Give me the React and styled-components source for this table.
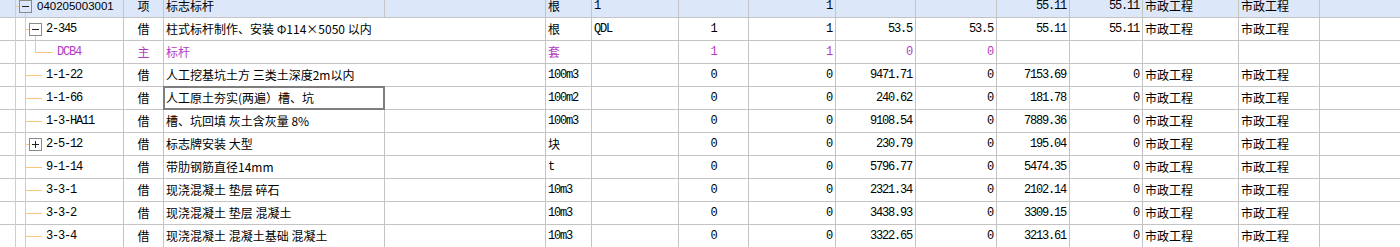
import React from 'react';
import styled, { createGlobalStyle, css } from 'styled-components';

const Global = createGlobalStyle`
  html, body { margin: 0; padding: 0; background: #ffffff; }
  body { font-family: "Noto Sans CJK SC", sans-serif; }
`;

const COLS = '124px 40px 221px 161px 46px 87px 70px 87px 80px 81px 73px 73px 96px 81px 1fr';
const LINE = '#c4c4c4';
const ORANGE = '#fcc67c';
const PURPLE = '#b23cc4';

const Viewport = styled.div`
  width: 1400px;
  height: 247px;
  overflow: hidden;
  background: #fff;
`;

const Table = styled.div`
  display: flex;
  flex-direction: column;
  margin-top: -5px;
`;

const Row = styled.div`
  display: grid;
  grid-template-columns: ${COLS};
  height: 23px;
  background: ${(p) => (p.$hl ? '#dce8fa' : '#ffffff')};
  color: ${(p) => (p.$purple ? PURPLE : '#000000')};
`;

const fonts = {
  cjk: css`
    font-family: "Noto Sans CJK SC", sans-serif;
    font-size: 12px;
  `,
  mono: css`
    font-family: "Liberation Mono", "Noto Sans CJK SC", monospace;
    font-size: 12px;
    letter-spacing: -1.2px;
  `,
  sans: css`
    font-family: "Liberation Sans", "Noto Sans CJK SC", sans-serif;
    font-size: 11.5px;
  `,
};

const Cell = styled.div`
  position: relative;
  box-sizing: border-box;
  height: 23px;
  line-height: 22px;
  white-space: nowrap;
  border-bottom: 1px solid ${LINE};
  border-right: ${(p) => (p.$last ? 'none' : `1px solid ${LINE}`)};
  grid-column: ${(p) => (p.$span ? `span ${p.$span}` : 'auto')};
  text-align: ${(p) => p.$align || 'left'};
  padding: ${(p) =>
    p.$align === 'right' ? '0 3px 0 0' : p.$align === 'center' ? '0' : '0 0 0 2px'};
  ${(p) => fonts[p.$font || 'cjk']}
  ${(p) =>
    p.$selected &&
    css`
      &::after {
        content: '';
        position: absolute;
        top: -1px;
        left: -1px;
        right: -1px;
        bottom: -1px;
        border: 2px solid #7e7e7e;
        z-index: 2;
      }
    `}
`;

const CodeCell = styled(Cell)`
  padding-left: ${(p) => p.$indent}px;
`;

const TreeSvg = styled.svg`
  position: absolute;
  top: 0;
  left: 0;
  overflow: visible;
  pointer-events: none;
`;

function Tree({ variant }) {
  const v = (x, y1, y2, k) => (
    <line key={k} x1={x + 0.5} x2={x + 0.5} y1={y1} y2={y2} stroke={ORANGE} />
  );
  const h = (x1, x2, k) => (
    <line key={k} x1={x1} x2={x2 + 1} y1={11.5} y2={11.5} stroke={ORANGE} />
  );
  const box = (x, plus, k) => (
    <g key={k}>
      <rect x={x + 0.5} y={5.5} width={12} height={12} fill="none" stroke="#8a8a8a" />
      <line x1={x + 3} x2={x + 10} y1={11.5} y2={11.5} stroke="#222" />
      {plus && <line x1={x + 6.5} x2={x + 6.5} y1={8} y2={15} stroke="#222" />}
    </g>
  );
  let parts = [];
  if (variant === 'root') {
    parts = [v(15, 0, 23, 'a'), h(15, 18, 'b'), box(19, false, 'c'), v(25, 18, 23, 'd')];
  } else if (variant === 'branchMinus') {
    parts = [v(15, 0, 23, 'a'), v(25, 0, 23, 'b'), h(25, 28, 'c'), box(29, false, 'd'), v(35, 18, 23, 'e')];
  } else if (variant === 'branchPlus') {
    parts = [v(15, 0, 23, 'a'), v(25, 0, 23, 'b'), h(25, 28, 'c'), box(29, true, 'd')];
  } else if (variant === 'leafDeep') {
    parts = [v(15, 0, 23, 'a'), v(25, 0, 23, 'b'), v(35, 0, 12, 'c'), h(35, 52, 'd')];
  } else {
    parts = [v(15, 0, 23, 'a'), v(25, 0, 23, 'b'), h(25, 41, 'c')];
  }
  return (
    <TreeSvg width="60" height="23" viewBox="0 0 60 23" shapeRendering="crispEdges">
      {parts}
    </TreeSvg>
  );
}

const isCJK = (s) => /[\u3000-\u9fff\uff00-\uffef]/.test(s);

const rows = [
  { code: '040205003001', tree: 'root', indent: 37, codeFont: 'sans', kind: '项', name: '标志标杆', unit: '根', c5: '1', c6: '', c7: '1', c8: '', c9: '', c10: '55.11', c11: '55.11', c12: '市政工程', c13: '市政工程', hl: true },
  { code: '2-345', tree: 'branchMinus', indent: 46, kind: '借', name: '柱式标杆制作、安装 Φ114×5050 以内', span: true, unit: '根', c5: 'QDL', c6: '1', c7: '1', c8: '53.5', c9: '53.5', c10: '55.11', c11: '55.11', c12: '市政工程', c13: '市政工程' },
  { code: 'DCB4', tree: 'leafDeep', indent: 57, kind: '主', name: '标杆', span: true, unit: '套', c5: '', c6: '1', c7: '1', c8: '0', c9: '0', c10: '', c11: '', c12: '', c13: '', purple: true },
  { code: '1-1-22', tree: 'leaf', indent: 46, kind: '借', name: '人工挖基坑土方 三类土深度2m以内', span: true, unit: '100m3', c5: '', c6: '0', c7: '0', c8: '9471.71', c9: '0', c10: '7153.69', c11: '0', c12: '市政工程', c13: '市政工程' },
  { code: '1-1-66', tree: 'leaf', indent: 46, kind: '借', name: '人工原土夯实(两遍）槽、坑', selected: true, unit: '100m2', c5: '', c6: '0', c7: '0', c8: '240.62', c9: '0', c10: '181.78', c11: '0', c12: '市政工程', c13: '市政工程' },
  { code: '1-3-HA11', tree: 'leaf', indent: 46, kind: '借', name: '槽、坑回填 灰土含灰量 8%', unit: '100m3', c5: '', c6: '0', c7: '0', c8: '9108.54', c9: '0', c10: '7889.36', c11: '0', c12: '市政工程', c13: '市政工程' },
  { code: '2-5-12', tree: 'branchPlus', indent: 46, kind: '借', name: '标志牌安装 大型', unit: '块', c5: '', c6: '0', c7: '0', c8: '230.79', c9: '0', c10: '195.04', c11: '0', c12: '市政工程', c13: '市政工程' },
  { code: '9-1-14', tree: 'leaf', indent: 46, kind: '借', name: '带肋钢筋直径14mm', unit: 't', c5: '', c6: '0', c7: '0', c8: '5796.77', c9: '0', c10: '5474.35', c11: '0', c12: '市政工程', c13: '市政工程' },
  { code: '3-3-1', tree: 'leaf', indent: 46, kind: '借', name: '现浇混凝土 垫层 碎石', unit: '10m3', c5: '', c6: '0', c7: '0', c8: '2321.34', c9: '0', c10: '2102.14', c11: '0', c12: '市政工程', c13: '市政工程' },
  { code: '3-3-2', tree: 'leaf', indent: 46, kind: '借', name: '现浇混凝土 垫层 混凝土', unit: '10m3', c5: '', c6: '0', c7: '0', c8: '3438.93', c9: '0', c10: '3309.15', c11: '0', c12: '市政工程', c13: '市政工程' },
  { code: '3-3-4', tree: 'leaf', indent: 46, kind: '借', name: '现浇混凝土 混凝土基础 混凝土', unit: '10m3', c5: '', c6: '0', c7: '0', c8: '3322.65', c9: '0', c10: '3213.61', c11: '0', c12: '市政工程', c13: '市政工程' },
];

const fontOf = (s) => (isCJK(s) ? 'cjk' : 'mono');

function GridRow({ r }) {
  return (
    <Row $hl={r.hl} $purple={r.purple}>
      <CodeCell $indent={r.indent} $font={r.codeFont || 'mono'}>
        <Tree variant={r.tree} />
        {r.code}
      </CodeCell>
      <Cell $align="center">{r.kind}</Cell>
      <Cell $span={r.span ? 2 : 0} $selected={r.selected}>{r.name}</Cell>
      {!r.span && <Cell />}
      <Cell $font={fontOf(r.unit)}>{r.unit}</Cell>
      <Cell $font="mono">{r.c5}</Cell>
      <Cell $font="mono" $align="center">{r.c6}</Cell>
      <Cell $font="mono" $align="right">{r.c7}</Cell>
      <Cell $font="mono" $align="right">{r.c8}</Cell>
      <Cell $font="mono" $align="right">{r.c9}</Cell>
      <Cell $font="mono" $align="right">{r.c10}</Cell>
      <Cell $font="mono" $align="right">{r.c11}</Cell>
      <Cell>{r.c12}</Cell>
      <Cell>{r.c13}</Cell>
      <Cell $last />
    </Row>
  );
}

export default function App() {
  return (
    <>
      <Global />
      <Viewport>
        <Table>
          {rows.map((r) => (
            <GridRow key={r.code} r={r} />
          ))}
        </Table>
      </Viewport>
    </>
  );
}
